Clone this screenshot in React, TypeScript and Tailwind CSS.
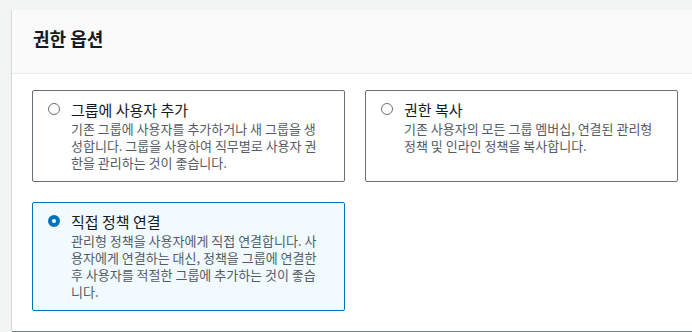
import React from "react";

const font = { fontFamily: '"Noto Sans CJK KR", "Noto Sans", sans-serif' };

type TileProps = {
  title: string;
  lines: string[];
  selected?: boolean;
};

function Tile({ title, lines, selected }: TileProps) {
  return (
    <div
      className={
        selected
          ? "flex items-start border border-[#0073bb] bg-[#f1faff] rounded-[2px] pl-[15px] pr-[12px] pt-[9px] pb-[10px]"
          : "flex items-start border border-[#687078] bg-white rounded-[2px] pl-[15px] pr-[12px] pt-[9px] pb-[10px]"
      }
    >
      {selected ? (
        <div className="mt-[3px] w-[12px] h-[12px] shrink-0 rounded-full border-[4px] border-[#0073bb] bg-white" />
      ) : (
        <div className="mt-[3px] w-[12px] h-[12px] shrink-0 rounded-full border-[1.5px] border-[#687078] bg-white" />
      )}
      <div className="ml-[11px] min-w-0 flex-1">
        <div className="text-[15px] leading-[20px] text-[#16191f]">{title}</div>
        <p className="text-[13px] leading-[17px] text-[#545b64] whitespace-pre">{lines.join("\n")}</p>
      </div>
    </div>
  );
}

export default function App() {
  return (
    <div className="w-[692px] h-[332px] overflow-hidden bg-[#f2f3f3] pt-[10px] pl-[12px]" style={font}>
      <div className="w-[686px] h-[321px] bg-white shadow-[0_1px_0_0_rgba(0,28,36,0.5),-1px_0_0_0_rgba(0,28,36,0.12)]">
        <div className="h-[64px] bg-[#fafafa] border-b border-[#eaeded] pl-[21px] pt-[16px]">
          <h2 className="text-[18px] leading-[24px] font-bold text-[#16191f]">권한 옵션</h2>
        </div>
        <div className="pt-[16px] px-[20px] pb-[20px]">
          <div className="grid grid-cols-2 gap-[20px]">
            <Tile
              title="그룹에 사용자 추가"
              lines={[
                "기존 그룹에 사용자를 추가하거나 새 그룹을 생",
                "성합니다. 그룹을 사용하여 직무별로 사용자 권",
                "한을 관리하는 것이 좋습니다.",
              ]}
            />
            <Tile
              title="권한 복사"
              lines={[
                "기존 사용자의 모든 그룹 멤버십, 연결된 관리형",
                "정책 및 인라인 정책을 복사합니다.",
              ]}
            />
            <Tile
              selected
              title="직접 정책 연결"
              lines={[
                "관리형 정책을 사용자에게 직접 연결합니다. 사",
                "용자에게 연결하는 대신, 정책을 그룹에 연결한",
                "후 사용자를 적절한 그룹에 추가하는 것이 좋습",
                "니다.",
              ]}
            />
          </div>
        </div>
      </div>
    </div>
  );
}
